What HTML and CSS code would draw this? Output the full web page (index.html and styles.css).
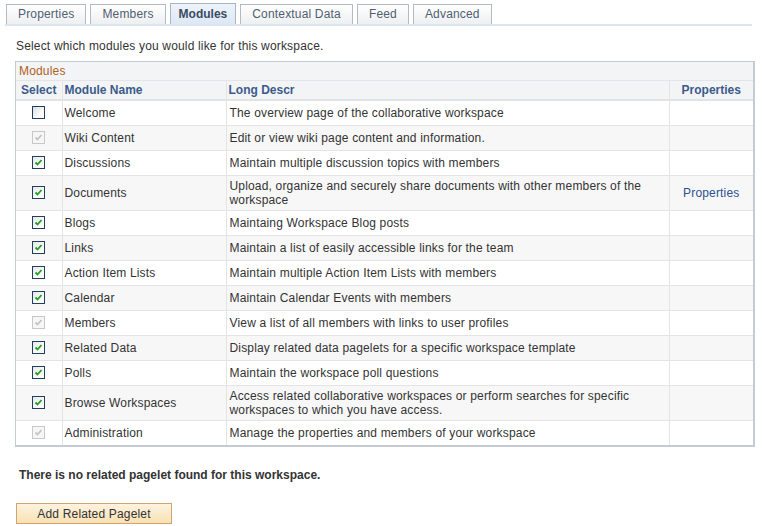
FILE: index.html
```html
<!DOCTYPE html>
<html>
<head>
<meta charset="utf-8">
<link rel="stylesheet" href="styles.css">
</head>
<body>
<div class="tabs">
  <div class="tab">Properties</div>
  <div class="tab">Members</div>
  <div class="tab active">Modules</div>
  <div class="tab">Contextual Data</div>
  <div class="tab">Feed</div>
  <div class="tab">Advanced</div>
</div>
<p class="intro">Select which modules you would like for this workspace.</p>
<div class="grid">
  <div class="gtitle">Modules</div>
  <table>
    <colgroup><col class="c1"><col class="c2"><col class="c3"><col class="c4"></colgroup>
    <tr class="hdr"><th class="ctr">Select</th><th>Module Name</th><th>Long Descr</th><th class="ctr">Properties</th></tr>
    <tr class="r"><td class="ctr"><span class="cb"></span></td><td>Welcome</td><td>The overview page of the collaborative workspace</td><td></td></tr>
    <tr class="r alt"><td class="ctr"><span class="cb dis"><svg viewBox="0 0 11 11"><path d="M2.5 5.5 L4.5 7.5 L8.5 3" /></svg></span></td><td>Wiki Content</td><td>Edit or view wiki page content and information.</td><td></td></tr>
    <tr class="r"><td class="ctr"><span class="cb on"><svg viewBox="0 0 11 11"><path d="M2.5 5.5 L4.5 7.5 L8.5 3" /></svg></span></td><td>Discussions</td><td>Maintain multiple discussion topics with members</td><td></td></tr>
    <tr class="r alt"><td class="ctr"><span class="cb on"><svg viewBox="0 0 11 11"><path d="M2.5 5.5 L4.5 7.5 L8.5 3" /></svg></span></td><td>Documents</td><td>Upload, organize and securely share documents with other members of the workspace</td><td class="ctr"><a class="lnk">Properties</a></td></tr>
    <tr class="r"><td class="ctr"><span class="cb on"><svg viewBox="0 0 11 11"><path d="M2.5 5.5 L4.5 7.5 L8.5 3" /></svg></span></td><td>Blogs</td><td>Maintaing Workspace Blog posts</td><td></td></tr>
    <tr class="r alt"><td class="ctr"><span class="cb on"><svg viewBox="0 0 11 11"><path d="M2.5 5.5 L4.5 7.5 L8.5 3" /></svg></span></td><td>Links</td><td>Maintain a list of easily accessible links for the team</td><td></td></tr>
    <tr class="r"><td class="ctr"><span class="cb on"><svg viewBox="0 0 11 11"><path d="M2.5 5.5 L4.5 7.5 L8.5 3" /></svg></span></td><td>Action Item Lists</td><td>Maintain multiple Action Item Lists with members</td><td></td></tr>
    <tr class="r alt"><td class="ctr"><span class="cb on"><svg viewBox="0 0 11 11"><path d="M2.5 5.5 L4.5 7.5 L8.5 3" /></svg></span></td><td>Calendar</td><td>Maintain Calendar Events with members</td><td></td></tr>
    <tr class="r"><td class="ctr"><span class="cb dis"><svg viewBox="0 0 11 11"><path d="M2.5 5.5 L4.5 7.5 L8.5 3" /></svg></span></td><td>Members</td><td>View a list of all members with links to user profiles</td><td></td></tr>
    <tr class="r alt"><td class="ctr"><span class="cb on"><svg viewBox="0 0 11 11"><path d="M2.5 5.5 L4.5 7.5 L8.5 3" /></svg></span></td><td>Related Data</td><td>Display related data pagelets for a specific workspace template</td><td></td></tr>
    <tr class="r"><td class="ctr"><span class="cb on"><svg viewBox="0 0 11 11"><path d="M2.5 5.5 L4.5 7.5 L8.5 3" /></svg></span></td><td>Polls</td><td>Maintain the workspace poll questions</td><td></td></tr>
    <tr class="r alt"><td class="ctr"><span class="cb on"><svg viewBox="0 0 11 11"><path d="M2.5 5.5 L4.5 7.5 L8.5 3" /></svg></span></td><td>Browse Workspaces</td><td>Access related collaborative workspaces or perform searches for specific workspaces to which you have access.</td><td></td></tr>
    <tr class="r last"><td class="ctr"><span class="cb dis"><svg viewBox="0 0 11 11"><path d="M2.5 5.5 L4.5 7.5 L8.5 3" /></svg></span></td><td>Administration</td><td>Manage the properties and members of your workspace</td><td></td></tr>
  </table>
</div>
<p class="note">There is no related pagelet found for this workspace.</p>
<button class="btn">Add Related Pagelet</button>
</body>
</html>
```
FILE: styles.css
```css
html, body {
  margin: 0;
  padding: 0;
  background: #ffffff;
}
body {
  font-family: "Liberation Sans", Arial, sans-serif;
  font-size: 12px;
  color: #333333;
  width: 762px;
  letter-spacing: 0.17px;
}
.tabs {
  display: flex;
  gap: 4px;
  align-items: flex-end;
  margin: 0 10px 0 5px;
  padding: 3px 0 0 1px;
  border-bottom: 2px solid #dbe5f1;
  height: 21px;
}
.tab {
  height: 19px;
  line-height: 19px;
  padding: 0 11px;
  border: 1px solid #b3bac2;
  border-bottom: none;
  background: linear-gradient(#ffffff, #eeeff1);
  color: #4f5f73;
  font-size: 12px;
}
.tab.active {
  height: 20px;
  line-height: 21px;
  padding: 0 8px;
  background: linear-gradient(#eef3fa, #dde8f5);
  border-color: #a8b6c6;
  color: #3b4b62;
  font-weight: bold;
  letter-spacing: 0;
}
.intro {
  margin: 13px 0 0 16px;
  height: 14px;
  line-height: 14px;
}
.grid {
  margin: 8px 0 0 15px;
  width: 737px;
  border: 1px solid #c4cbd2;
  border-right-width: 2px;
  border-bottom-width: 2px;
}
.gtitle {
  height: 18px;
  line-height: 19px;
  padding-left: 3px;
  background: #f2f4f5;
  color: #b0621e;
  font-size: 12px;
  border-bottom: 1px solid #e2e6ea;
}
table {
  width: 737px;
  border-collapse: collapse;
  table-layout: fixed;
}
col.c1 { width: 46px; }
col.c2 { width: 164px; }
col.c3 { width: 443px; }
col.c4 { width: 84px; }
th {
  height: 18px;
  padding: 0 2px;
  text-align: left;
  font-weight: bold;
  letter-spacing: 0;
  color: #3c5b8c;
  background: #f2f4f5;
  border-left: 1px solid #e4e4e4;
  border-bottom: 2px solid #e2e2e2;
  line-height: 14px;
}
td {
  padding: 3px 2px;
  line-height: 14px;
  vertical-align: middle;
  border-left: 1px solid #e4e4e4;
  border-bottom: 1px solid #e4e4e4;
}
td:nth-child(3) { padding-left: 3px; }
th:first-child, td:first-child { border-left: none; }
tr.last td { border-bottom: none; }
tr.r { height: 25px; }
tr.alt td { background: #f7f7f7; }
.ctr { text-align: center; }
.lnk { color: #2d5091; }
.cb {
  display: inline-block;
  width: 11px;
  height: 11px;
  border: 1px solid #213f5f;
  background: linear-gradient(135deg, #dcdcdc, #ffffff 70%);
  vertical-align: middle;
  position: relative;
  top: -1px;
}
.cb svg {
  display: block;
  width: 11px;
  height: 11px;
}
.cb path {
  fill: none;
  stroke-width: 1.8;
}
.cb.on { background: linear-gradient(135deg, #e6e6e6, #ffffff 70%); }
.cb.on path { stroke: #1fa01f; }
.cb.dis {
  border-color: #c8c8c8;
  background: #f6f6f6;
}
.cb.dis path { stroke: #c4c4c4; }
.note {
  margin: 21px 0 0 19px;
  height: 14px;
  line-height: 14px;
  font-weight: bold;
  letter-spacing: 0;
  color: #333333;
}
.btn {
  display: block;
  margin: 21px 0 0 16px;
  width: 156px;
  height: 21px;
  padding: 0;
  border: 1px solid #d4a46b;
  background: linear-gradient(#fdf3e0, #f9e1b4);
  font-family: "Liberation Sans", Arial, sans-serif;
  font-size: 12px;
  letter-spacing: 0.17px;
  color: #333333;
}
```
